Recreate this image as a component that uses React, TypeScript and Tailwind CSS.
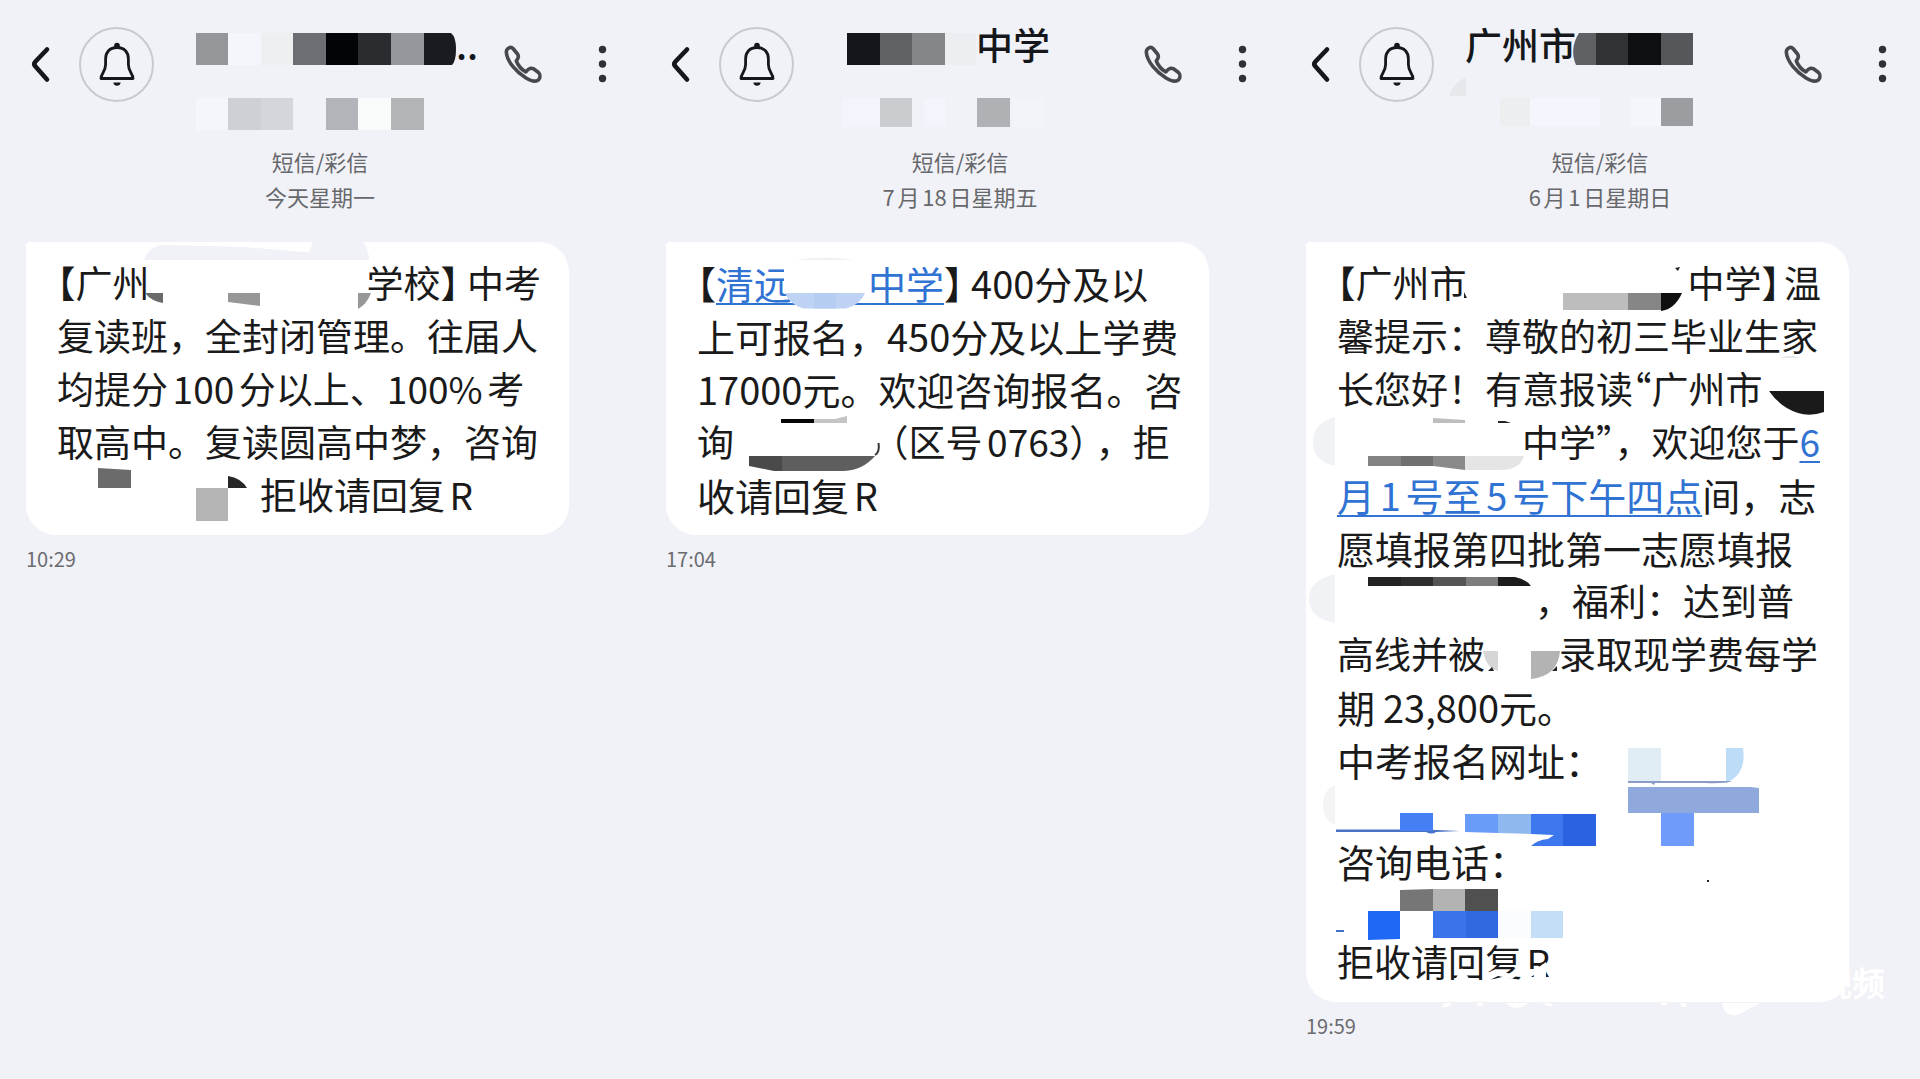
import React from "react";

type Chip = [x: number, y: number, w: number, h: number, fill: string];

interface ThreadProps {
    title: React.ReactNode;
    titleMask: React.ReactNode;
    date: string;
    time: string;
    mask: React.ReactNode;
    children: React.ReactNode;
}

function Chips({ items }: { items: Chip[] }) {
    return (
        <>
            {items.map(([x, y, w, h, fill]) => (
                <rect key={`${x}-${y}`} x={x} y={y} width={w} height={h} fill={fill} />
            ))}
        </>
    );
}

const lineStyles = {
    normal: "flex h-[53px] text-[37px] leading-[53px]",
    loose: "flex h-[53px] text-[38px] leading-[53px]",
    // no extra space between Chinese text and digits
    plain: "flex h-[53px] text-[38px] leading-[53px] [text-autospace:no-autospace]",
};

function Line({ children, kind = "normal" }: { children: React.ReactNode; kind?: keyof typeof lineStyles }) {
    return <div className={lineStyles[kind]}>{children}</div>;
}

// half-width form of a full-width bracket or quote
function Half({ children }: { children: React.ReactNode }) {
    return <span className="[font-feature-settings:'halt']">{children}</span>;
}

function TextLink({ children }: { children: React.ReactNode }) {
    return (
        <a href="#" className="whitespace-pre text-[#3173d3] underline decoration-2 underline-offset-4 [text-decoration-skip-ink:none]">
            {children}
        </a>
    );
}

function Thread({ title, titleMask, date, time, mask, children }: ThreadProps) {
    return (
        <section className="min-w-0 flex-1">
            <header className="flex h-32 items-center pr-[31px] pl-[29px]">
                <button type="button" aria-label="返回" className="mr-[26px]">
                    <svg className="h-10 w-6" viewBox="0 0 24 40" fill="none" stroke="#15171b" strokeWidth={4.6} strokeLinecap="round" strokeLinejoin="round">
                        <path d="M18 5.5 6.500 17.500Q4 20 6.500 22.500L18 35.500" />
                    </svg>
                </button>
                <button type="button" aria-label="通知" className="flex size-[75px] shrink-0 items-center justify-center rounded-full border-2 border-[#c9cace]">
                    <svg className="h-11 w-10" viewBox="0 0 40 44" fill="none" stroke="#15171b" strokeWidth={2.8} strokeLinejoin="round">
                        <circle cx="20" cy="3.6" r="2.8" fill="#15171b" stroke="none" />
                        <path d="M20 5.500C12.500 5.500 8.600 10.500 8.600 17V22.500C8.600 30 4 31.500 4 36.500H36C36 31.500 31.400 30 31.400 22.500V17C31.400 10.500 27.500 5.500 20 5.500Z" />
                        <path d="M16.300 40.500H23.700Q23 43.800 20 43.800T16.300 40.500Z" fill="#15171b" stroke="none" />
                    </svg>
                </button>
                <div className="relative min-w-0 flex-1 self-stretch pt-[17px]">
                    <h2 className="flex h-[54px] text-[37px] leading-[54px] font-medium whitespace-nowrap text-[#15171b]">{title}</h2>
                    <svg className="absolute top-0 left-0 h-32 w-[351px] overflow-visible" viewBox="154 0 351 128" aria-hidden="true">
                        {titleMask}
                    </svg>
                </div>
                <button type="button" aria-label="拨打电话" className="mr-[55px]">
                    <svg className="h-10 w-[38px]" viewBox="0 0 38 40" fill="none" stroke="#47484c" strokeWidth={3.6} strokeLinejoin="round">
                        <path d="M2.300 8C2.500 4.500 6.500 2 9 4.500L13.500 10C15.200 12.500 14.500 14.500 12.300 17C14 21.500 17.500 25.500 21.800 28C24 25 26.500 23.300 29.500 24.800L34.500 28.500C36.500 30.500 36.500 33.500 34.500 35.800C31.500 38.500 27 37 22 34C12.500 28 2.800 17.500 2.300 8Z" />
                    </svg>
                </button>
                <button type="button" aria-label="更多">
                    <svg className="h-10 w-3" viewBox="0 0 12 40" fill="#303135">
                        <circle cx="5.500" cy="5.500" r="3.700" />
                        <circle cx="5.500" cy="20" r="3.700" />
                        <circle cx="5.500" cy="34.500" r="3.700" />
                    </svg>
                </button>
            </header>

            <div className="pt-4 text-center text-[22px] leading-[35px] text-[#67686c]">
                <p>短信/彩信</p>
                <p>{date}</p>
            </div>

            <div className="relative mt-7 mr-[71px] ml-[26px] rounded-[30px] rounded-tl-sm bg-white py-[14px] pr-7 pl-[31px] whitespace-nowrap text-[#1a1a1a]">
                {children}
                <svg className="absolute top-0 left-0 h-px w-[542px] overflow-visible" viewBox="26 242 542 1" preserveAspectRatio="xMinYMin" aria-hidden="true">
                    {mask}
                </svg>
            </div>
            <time className="mt-3 ml-[26px] block text-[20px] leading-6 text-[#6b6c70]">{time}</time>
        </section>
    );
}

function RetakeSchool() {
    return (
        <Thread
            title={<span className="pl-[302px]">..</span>}
            date="今天星期一"
            time="10:29"
            titleMask={
                <>
                    <Chips
                        items={[
                            [196, 33, 32, 32, "#959699"],
                            [228, 33, 33, 32, "#f5f6fb"],
                            [261, 33, 32, 32, "#eeeff1"],
                            [293, 33, 33, 32, "#6c6e73"],
                            [326, 33, 32, 32, "#020408"],
                            [358, 33, 33, 32, "#2a2c30"],
                            [391, 33, 33, 32, "#94979c"],
                            [196, 98, 32, 32, "#f5f6fb"],
                            [228, 98, 33, 32, "#cdd1d5"],
                            [261, 98, 32, 32, "#d3d7dc"],
                            [326, 98, 32, 32, "#b3b4b9"],
                            [358, 98, 33, 32, "#f9fafa"],
                            [391, 98, 33, 32, "#b3b4b6"],
                        ]}
                    />
                    <path d="M424 33H451Q456 37 456 49T452 65H424Z" fill="#181c20" />
                </>
            }
            mask={
                <>
                    <path d="M144 260Q149 245 165 245L245 247 309 252.500 313 242H363Q369 250 369 260Z" fill="#f1f2f7" />
                    <path d="M145 293H163V303Q151 301 145 293Z" fill="#6a6a6a" />
                    <path d="M228 293H260V306L228 302Z" fill="#979797" />
                    <path d="M358 293H371Q367 304 358 309Z" fill="#979797" />
                    <path d="M98 468 131 470V488H98Z" fill="#6b6b6b" />
                    <path d="M196 488H228V521H196Z" fill="#b4b4b4" />
                    <path d="M228 476Q241 478 247 488H228Z" fill="#262626" />
                </>
            }
        >
            <Line>
                <Half>【</Half>广州
                <span className="w-[220px]" />
                学校<Half>】</Half>
                <span className="w-2" />
                中考
            </Line>
            <Line>复读班，全封闭管理。往届人</Line>
            <Line>均提分100分以上、100%考</Line>
            <Line>取高中。复读圆高中梦，咨询</Line>
            <Line>
                <span className="w-[203px]" />
                拒收请回复R
            </Line>
        </Thread>
    );
}

function QingyuanSchool() {
    return (
        <Thread
            title={<span className="pl-[182px]">中学</span>}
            date="7月18日星期五"
            time="17:04"
            titleMask={
                <Chips
                    items={[
                        [207, 33, 33, 32, "#14161b"],
                        [240, 33, 32, 32, "#616264"],
                        [272, 33, 33, 32, "#848688"],
                        [305, 33, 31, 32, "#edeef1"],
                        [203, 98, 37, 29, "#f2f6fc"],
                        [240, 98, 32, 29, "#cbccd0"],
                        [284, 98, 21, 29, "#f2f6fc"],
                        [337, 98, 33, 29, "#b0b1b5"],
                        [373, 98, 32, 29, "#f3f4f9"],
                    ]}
                />
            }
            mask={
                <>
                    <path d="M144 258H228V294H144Z" fill="#ffffff" />
                    <path d="M155 260Q185 255 214 260Z" fill="#f1f1f2" />
                    <path d="M145 293H225Q220 305 206 308.500H163Q149 304 145 293Z" fill="#bed2f4" />
                    <path d="M174 293H196V308.500H174Z" fill="#b6cdf2" />
                    <path d="M141 419H174V423H141Z" fill="#050505" />
                    <path d="M174 419H195L207 416V423H174Z" fill="#c4c4c4" />
                    <path d="M109 456H142V471H134L109 466Z" fill="#4a4a4a" />
                    <path d="M142 456H235Q223 470 204 471H142Z" fill="#5e5e5e" />
                    <path d="M238.500 443Q240 452 235 455" fill="none" stroke="#333333" strokeWidth={2} />
                </>
            }
        >
            <Line kind="plain">
                <Half>【</Half>
                <TextLink>清远{"\u3000\u3000"}中学</TextLink>
                <Half>】</Half>
                <span className="w-2" />
                400分及以
            </Line>
            <Line kind="plain">上可报名，450分及以上学费</Line>
            <Line kind="plain">17000元。欢迎咨询报名。咨</Line>
            <Line>
                询
                <span className="w-[156px]" />
                <Half>（</Half>区号0763<Half>）</Half>
                <span className="w-2" />
                ，拒
            </Line>
            <Line kind="loose">收请回复R</Line>
        </Thread>
    );
}

function GuangzhouSchool() {
    return (
        <Thread
            title={<span className="pl-[31px]">广州市</span>}
            date="6月1日星期日"
            time="19:59"
            titleMask={
                <>
                    <path d="M299 33H316V65H296Q289 49 299 33Z" fill="#606164" />
                    <path d="M169 96Q172 84 186 77V96Z" fill="#e6e8ec" />
                    <Chips
                        items={[
                            [316, 33, 32, 32, "#313234"],
                            [348, 33, 33, 32, "#0e0f11"],
                            [381, 33, 32, 32, "#56575b"],
                            [220, 98, 30, 28, "#edeef0"],
                            [250, 98, 70, 28, "#f3f6fc"],
                            [351, 98, 30, 28, "#f5f6fc"],
                            [381, 98, 32, 28, "#9a9ea1"],
                        ]}
                    />
                </>
            }
            mask={
                <>
                    <path d="M184 292 187 298H184ZM395 268 400 267 398 271Z" fill="#222222" />
                    <path d="M381 293H402Q395 309 381 311Z" fill="#101010" />
                    <path d="M500 358Q510 353 520 358Z" fill="#e9e9e9" />
                    <path d="M489 391H544V412Q530 417 518 413 500 407 489 391Z" fill="#1a1a1a" />
                    <path d="M55 417Q33 423 33 442T55 466Z" fill="#f1f2f6" />
                    <path d="M153 418 185 420V423H153Z" fill="#bdbdbd" />
                    <path d="M218 421H225L231 423H218Z" fill="#222222" />
                    <path d="M153 456H185V470L153 466Z" fill="#8a8a8a" />
                    <path d="M185 456H244Q240 470 220 470H185Z" fill="#e5e5e5" />
                    <path d="M55 574Q29 580 29 599T55 623Z" fill="#f1f2f6" />
                    <path d="M218 577H235Q246 579 251 586H218Z" fill="#1c1c1c" />
                    <path d="M203 651H218V671Q206 668 203 651Z" fill="#d6d6d6" />
                    <path d="M208 671 212 667 214 671ZM272 671 277 666V671Z" fill="#222222" />
                    <path d="M251 651H280Q278 676 251 679Z" fill="#b3b3b3" />
                    <path d="M446 748H463Q467 774 446 783Z" fill="#bcdcf8" />
                    <path d="M348 781H452Q445 784 425 783H375L374 785 371 783H348Z" fill="#8b9cc8" />
                    <path d="M348 787H470L479 788V813H348Z" fill="#8fa9dc" />
                    <path d="M55 785Q43 790 43 805T55 825Z" fill="#f4f4f4" />
                    <path d="M56 829.500H145L180 831 156 832Q152 835 146 832H56Z" fill="#4a72c4" />
                    <path d="M185 814H218V833L185 832Z" fill="#699cf8" />
                    <path d="M218 814H251V834L218 833Z" fill="#8fb8f0" />
                    <path d="M251 814H283V846H251Q257 840 268 839L274 835 251 834Z" fill="#3d77ed" />
                    <path d="M120 890 153 889V911H120Z" fill="#767676" />
                    <path d="M88 911H120V939L88 940Z" fill="#1e68f5" />
                    <Chips
                        items={[
                            [283, 293, 65, 17, "#bdbdbd"],
                            [348, 293, 33, 17, "#868686"],
                            [88, 456, 33, 10, "#828282"],
                            [121, 456, 32, 10, "#707070"],
                            [88, 577, 33, 9, "#222222"],
                            [121, 577, 32, 9, "#2e2e2e"],
                            [153, 577, 33, 9, "#555555"],
                            [186, 577, 32, 9, "#7d7d7d"],
                            [348, 748, 33, 33, "#e0edf4"],
                            [381, 813, 33, 33, "#6f9bfb"],
                            [120, 813, 33, 18, "#4480f4"],
                            [283, 814, 33, 32, "#2a62e2"],
                            [153, 889, 32, 22, "#b3b3b3"],
                            [185, 889, 33, 22, "#505050"],
                            [153, 911, 33, 27, "#3a74ea"],
                            [186, 911, 32, 27, "#2f6ae0"],
                            [218, 911, 33, 27, "#fafdff"],
                            [251, 911, 32, 27, "#c5def8"],
                            [56, 930, 8, 2, "#3f74c0"],
                            [427, 880, 2, 2, "#222222"],
                        ]}
                    />
                    {/* worn edge of the watermark over the last line */}
                    <path d="M176 978 182 968 190 980ZM203 975 216 969 236 976 232 979 218 976 206 982ZM244 969H256L266 962V978L258 972 244 982Z" fill="#ffffff" />
                    <path d="M164 1003H172L168 1007H162ZM196 1003H204L200 1007ZM226 1003H248Q243 1008 237 1008T226 1003ZM262 1003H270L274 1006H268ZM380 1003H388L384 1006ZM400 1003H406V1007H402ZM442 1003H480Q470 1008 462 1013 451 1019 444 1010Z" fill="#ffffff" />
                </>
            }
        >
            <Line>
                <Half>【</Half>广州市
                <span className="w-[221px]" />
                中学<Half>】</Half>
                <span className="w-1" />温
            </Line>
            <Line>馨提示：尊敬的初三毕业生家</Line>
            <Line>
                长您好！有意报读<Half>“</Half>广州市
            </Line>
            <Line>
                <span className="w-[185px]" />
                中学<Half>”</Half>，欢迎您于<TextLink>6</TextLink>
            </Line>
            <Line kind="loose">
                <TextLink>月1号至5号下午四点</TextLink>间，志
            </Line>
            <Line kind="loose">愿填报第四批第一志愿填报</Line>
            <Line>
                <span className="w-[198px]" />
                ，福利：达到普
            </Line>
            <Line>
                高线并被
                <span className="w-[74px]" />
                录取现学费每学
            </Line>
            <Line kind="plain">
                期<span className="w-2" />
                23,800元。
            </Line>
            <div className="flex flex-col gap-12">
                <Line kind="loose">中考报名网址：</Line>
                <Line kind="loose">咨询电话：</Line>
                <Line>拒收请回复R</Line>
            </div>
            <span className="absolute right-[-36px] bottom-0 text-[33px] leading-10 font-bold text-white">视频</span>
        </Thread>
    );
}

export default function App() {
    return (
        <main lang="zh-CN" className="flex min-h-screen overflow-hidden bg-[#f1f2f7] font-['Noto_Sans_CJK_SC',sans-serif] [text-autospace:normal]">
            <RetakeSchool />
            <QingyuanSchool />
            <GuangzhouSchool />
        </main>
    );
}
